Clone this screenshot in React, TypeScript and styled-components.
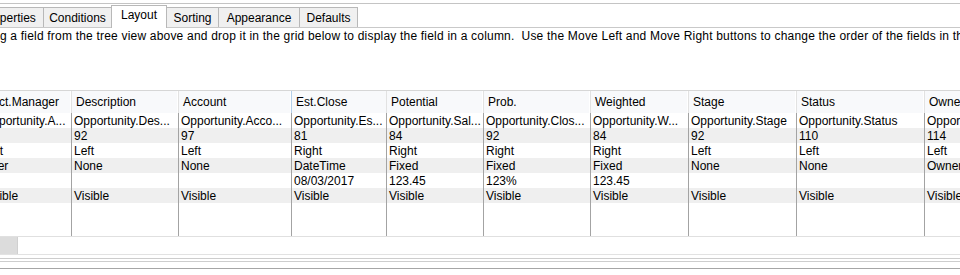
import React from "react";
import styled, { createGlobalStyle, css } from "styled-components";

const GlobalStyle = createGlobalStyle`
  html, body {
    margin: 0;
    padding: 0;
    background: #ffffff;
    overflow: hidden;
  }
  body {
    font-family: "Liberation Sans", Arial, sans-serif;
    font-size: 12px;
    color: #000000;
  }
`;

const Frame = styled.div`
  width: 960px;
  height: 275px;
  overflow: hidden;
  display: flex;
  flex-direction: column;
  background: #ffffff;
`;

const TopRule = styled.div`
  height: 1px;
  margin-top: 3px;
  background: #c4c4c4;
  flex: none;
`;

const TabStrip = styled.div`
  display: flex;
  align-items: flex-end;
  height: 22px;
  margin-top: 1px;
  margin-left: -27px;
  border-bottom: 1px solid #c9c9c9;
  flex: none;
`;

const Tab = styled.div<{ $w: number; $active?: boolean }>`
  box-sizing: border-box;
  width: ${(p) => p.$w}px;
  height: 20px;
  margin-left: -1px;
  border: 1px solid #b8b8b8;
  border-bottom: none;
  background: #f0f0f0;
  display: flex;
  align-items: center;
  justify-content: center;
  white-space: nowrap;
  line-height: 15px;
  padding-top: 1px;
  &:first-child {
    margin-left: 0;
  }
  ${(p) =>
    p.$active &&
    css`
      height: 23px;
      margin-bottom: -1px;
      background: #ffffff;
      position: relative;
      z-index: 1;
      padding-top: 0;
      padding-bottom: 3px;
    `}
`;

const Hint = styled.div`
  margin-top: 1px;
  margin-left: -20px;
  line-height: 15px;
  letter-spacing: 0.2px;
  white-space: pre;
  flex: none;
`;

const Grid = styled.div`
  margin-top: 46px;
  margin-left: -19px;
  border-top: 1px solid #d6d6d6;
  flex: none;
`;

const COLS = "91px 107px 113px 95px 97px 107px 98px 108px 128px 120px";

const HeaderRow = styled.div`
  display: grid;
  grid-template-columns: ${COLS};
  height: 22px;
  background: #f8f9fb;
`;

const HeaderCell = styled.div<{ $hot?: boolean }>`
  box-sizing: border-box;
  padding-left: 4px;
  padding-top: 1px;
  line-height: 21px;
  white-space: nowrap;
  overflow: hidden;
  border-right: 1px solid #e2e2e2;
  box-shadow: inset -1px 0 0 #ffffff;
  ${(p) =>
    p.$hot &&
    css`
      box-shadow: -1px 0 0 #b4cfea;
    `}
`;

const DataRow = styled.div<{ $alt: boolean }>`
  display: grid;
  grid-template-columns: ${COLS};
  height: 15px;
  background: ${(p) => (p.$alt ? "#efefef" : "#ffffff")};
`;

const Cell = styled.div`
  box-sizing: border-box;
  padding-left: 2px;
  padding-top: 1px;
  line-height: 15px;
  white-space: nowrap;
  overflow: hidden;
  border-right: 1px solid #a3a3a3;
`;

const FillerRow = styled.div`
  display: grid;
  grid-template-columns: ${COLS};
  height: 33px;
  border-bottom: 1px solid #e0e0e0;
`;

const ScrollBar = styled.div`
  display: flex;
  height: 17px;
  border-bottom: 1px solid #e2e2e2;
  flex: none;
`;

const ScrollStub = styled.div`
  width: 17px;
  height: 100%;
  background: #dcdcdc;
  border-right: 1px solid #d0d0d0;
`;

const Rule = styled.div<{ $gap: number; $color: string }>`
  flex: none;
  height: 1px;
  margin-top: ${(p) => p.$gap}px;
  background: ${(p) => p.$color};
`;

const tabs = [
  { label: "Properties", w: 71 },
  { label: "Conditions", w: 69 },
  { label: "Layout", w: 56, active: true },
  { label: "Sorting", w: 53 },
  { label: "Appearance", w: 82 },
  { label: "Defaults", w: 59 },
];

const headers = [
  "Acct.Manager",
  "Description",
  "Account",
  "Est.Close",
  "Potential",
  "Prob.",
  "Weighted",
  "Stage",
  "Status",
  "Owner",
];

const rows: string[][] = [
  [
    "Opportunity.A...",
    "Opportunity.Des...",
    "Opportunity.Acco...",
    "Opportunity.Es...",
    "Opportunity.Sal...",
    "Opportunity.Clos...",
    "Opportunity.W...",
    "Opportunity.Stage",
    "Opportunity.Status",
    "Opportunity.Owner",
  ],
  ["92", "92", "97", "81", "84", "92", "84", "92", "110", "114"],
  ["Left", "Left", "Left", "Right", "Right", "Right", "Right", "Left", "Left", "Left"],
  ["User", "None", "None", "DateTime", "Fixed", "Fixed", "Fixed", "None", "None", "Owner"],
  ["", "", "", "08/03/2017", "123.45", "123%", "123.45", "", "", ""],
  ["Visible", "Visible", "Visible", "Visible", "Visible", "Visible", "Visible", "Visible", "Visible", "Visible"],
];

export default function App() {
  return (
    <Frame>
      <GlobalStyle />
      <TopRule />
      <TabStrip>
        {tabs.map((t) => (
          <Tab key={t.label} $w={t.w} $active={t.active}>
            {t.label}
          </Tab>
        ))}
      </TabStrip>
      <Hint>
        {
          "Drag a field from the tree view above and drop it in the grid below to display the field in a column.  Use the Move Left and Move Right buttons to change the order of the fields in the grid."
        }
      </Hint>
      <Grid>
        <HeaderRow>
          {headers.map((h) => (
            <HeaderCell key={h} $hot={h === "Est.Close"}>
              {h}
            </HeaderCell>
          ))}
        </HeaderRow>
        {rows.map((r, i) => (
          <DataRow key={i} $alt={i % 2 === 1}>
            {r.map((v, j) => (
              <Cell key={j}>{v}</Cell>
            ))}
          </DataRow>
        ))}
        <FillerRow>
          {headers.map((h) => (
            <Cell key={h} />
          ))}
        </FillerRow>
      </Grid>
      <ScrollBar>
        <ScrollStub />
      </ScrollBar>
      <Rule $gap={3} $color="#cdcdcd" />
      <Rule $gap={2} $color="#cdcdcd" />
      <Rule $gap={6} $color="#a6a6a6" />
    </Frame>
  );
}
